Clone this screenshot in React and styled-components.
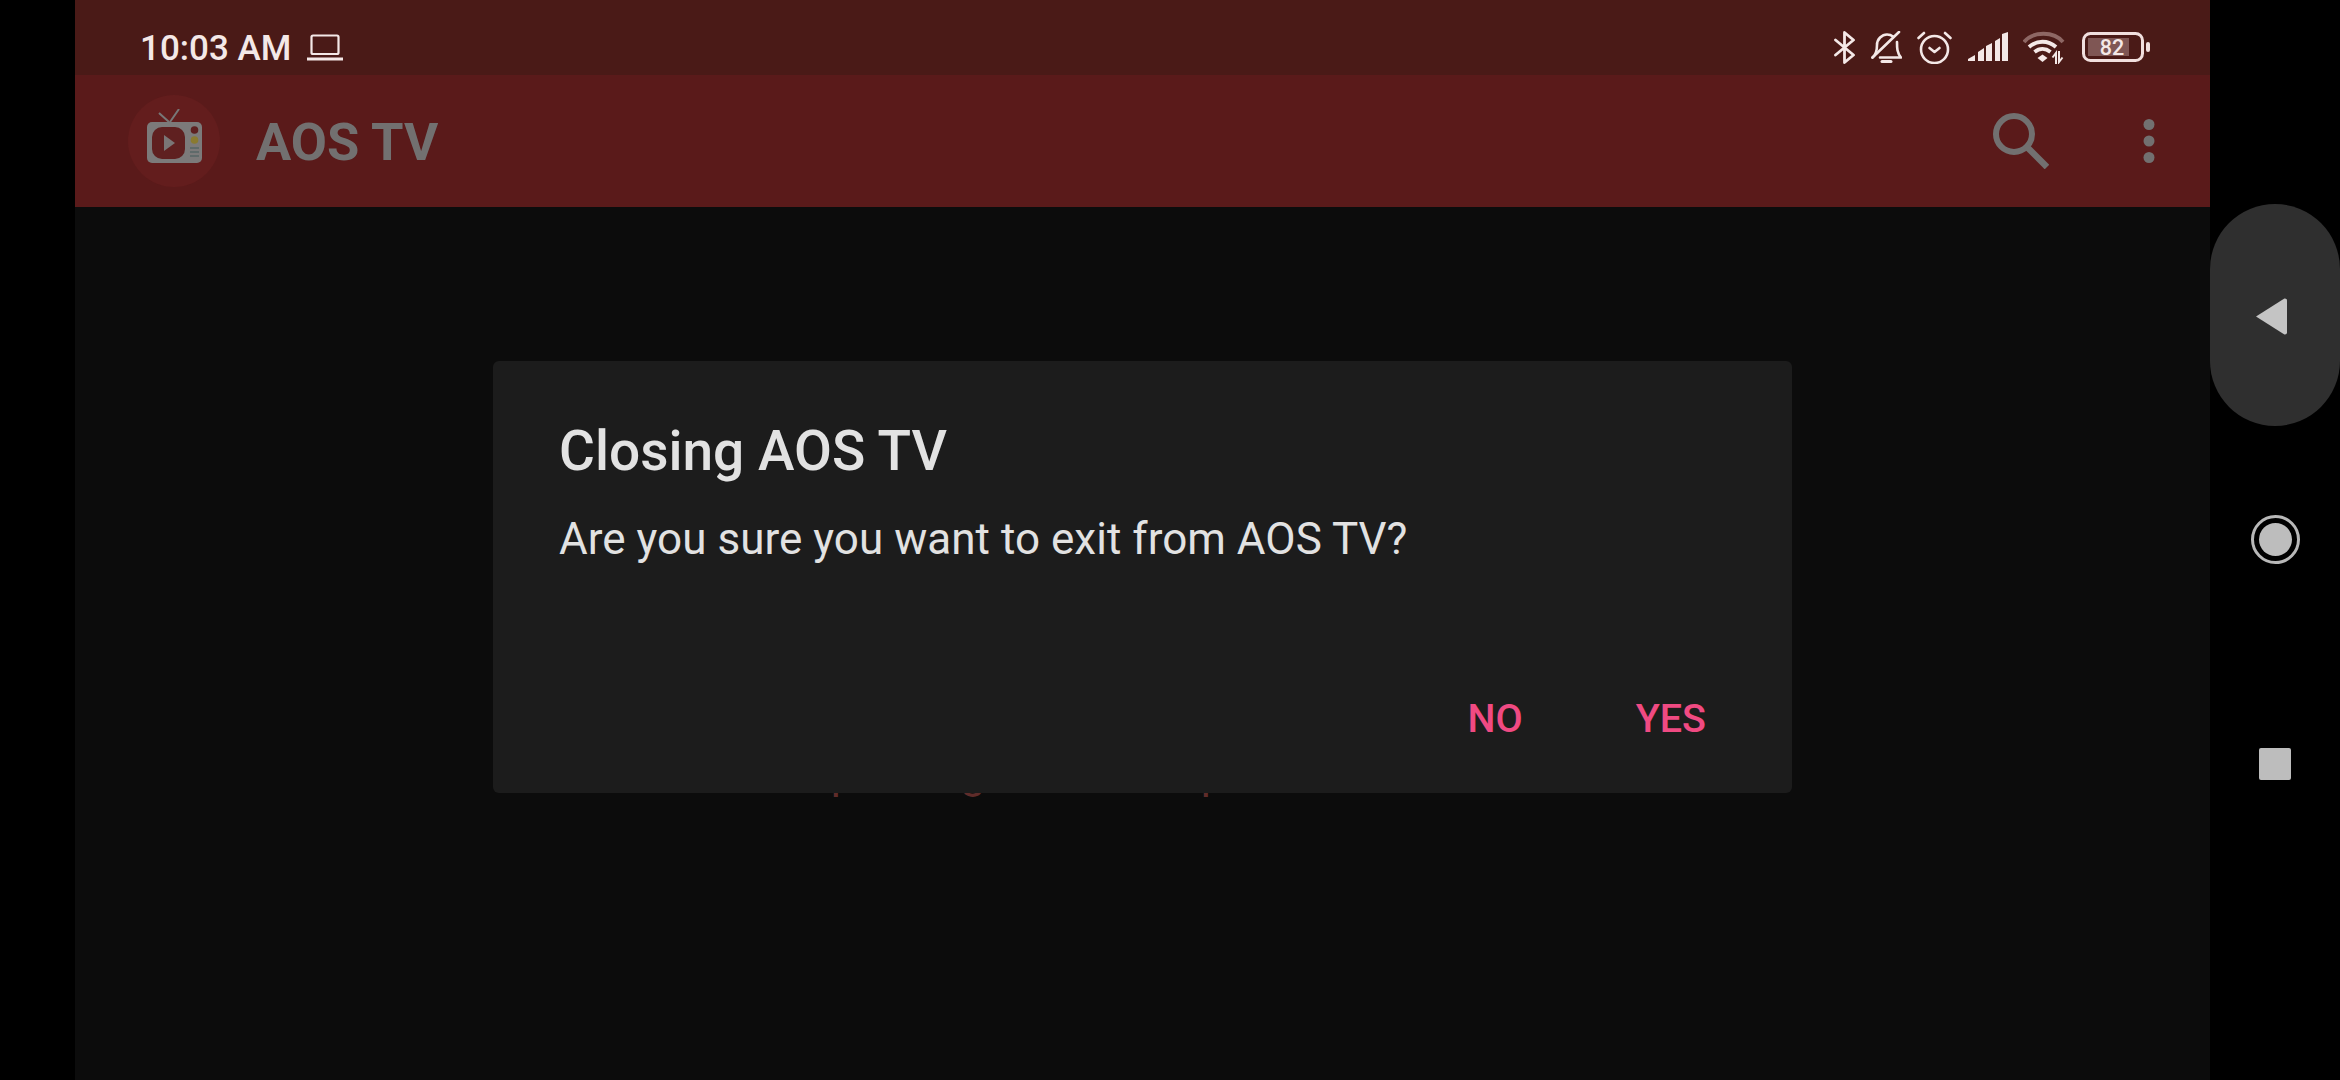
import React from "react";
import styled, { createGlobalStyle } from "styled-components";

const Global = createGlobalStyle`
  html, body { margin: 0; padding: 0; background: #000; width: 2340px; height: 1080px; overflow: hidden; }
  #root { width: 2340px; height: 1080px; }
  * { box-sizing: border-box; }
`;

const Device = styled.div`
  display: grid;
  grid-template-columns: 75px 2135px 130px;
  width: 2340px;
  height: 1080px;
  background: #000;
  font-family: Roboto, "Noto Sans", sans-serif;
`;
const Gutter = styled.div`background: #000;`;
const Screen = styled.div`
  position: relative;
  display: flex;
  flex-direction: column;
  background: #0c0c0c;
  overflow: hidden;
`;
const StatusBar = styled.div`
  height: 75px;
  flex: none;
  background: #4a1a17;
  display: flex;
  align-items: center;
  justify-content: space-between;
  padding: 19px 60px 0 65px;
  color: #f4e8e7;
`;
const Clock = styled.div`
  display: flex;
  align-items: center;
  gap: 16px;
  font-size: 35px;
  font-weight: 500;
  line-height: 40px;
`;
const ClockText = styled.span`
  padding-top: 3px;
`;
const StatusIcons = styled.div`
  display: flex;
  align-items: center;
  gap: 15.6px;
`;
const Toolbar = styled.div`
  height: 132px;
  flex: none;
  background: #5a1a1a;
  display: flex;
  align-items: center;
  padding: 0 55px 0 53px;
`;
const LogoCircle = styled.div`
  width: 92px;
  height: 92px;
  border-radius: 50%;
  background: #631d1d;
  display: flex;
  align-items: center;
  justify-content: center;
  padding-bottom: 10px;
  flex: none;
`;
const AppTitle = styled.div`
  margin-left: 36px;
  font-size: 52.5px;
  font-weight: 700;
  color: #727070;
  flex: 1;
  padding-top: 2px;
`;
const ToolButtons = styled.div`
  display: flex;
  align-items: center;
  gap: 94px;
`;
const Content = styled.div`
  flex: 1;
  display: flex;
  justify-content: center;
  padding-top: 536px;
`;
const HiddenText = styled.div`
  font-size: 44px;
  line-height: 60px;
  color: #5f2c2a;
  white-space: nowrap;
`;
const Dialog = styled.div`
  position: absolute;
  left: 418px;
  top: 361px;
  width: 1299px;
  height: 432px;
  background: #1c1c1c;
  border-radius: 6px;
  display: flex;
  flex-direction: column;
  padding: 0 66px;
`;
const DialogTitle = styled.div`
  margin-top: 60px;
  font-size: 55px;
  line-height: 60px;
  font-weight: 500;
  color: #e2e2e2;
`;
const DialogBody = styled.div`
  margin-top: 33px;
  font-size: 44px;
  line-height: 50px;
  letter-spacing: 0.03px;
  color: #e2e2e2;
`;
const DialogActions = styled.div`
  margin-top: auto;
  margin-bottom: 52px;
  display: flex;
  justify-content: flex-end;
  gap: 113px;
  padding-right: 20px;
`;
const ActionButton = styled.div`
  font-size: 39.5px;
  font-weight: 500;
  line-height: 44px;
  color: #f04a82;
`;
const Rail = styled.div`
  display: flex;
  flex-direction: column;
  align-items: center;
  background: #000;
  padding-top: 204px;
`;
const BackPill = styled.div`
  width: 130px;
  height: 222px;
  border-radius: 65px;
  background: #2f2f2f;
  display: flex;
  align-items: center;
  justify-content: center;
  padding: 3px 7px 0 0;
`;
const HomeRing = styled.div`
  margin-top: 89px;
  width: 49px;
  height: 49px;
  border-radius: 50%;
  border: 3px solid #b8b8b8;
  padding: 5px;
  display: flex;
`;
const HomeDot = styled.div`
  flex: 1;
  border-radius: 50%;
  background: #bdbdbd;
`;
const RecentSquare = styled.div`
  margin-top: 184px;
  width: 32px;
  height: 32px;
  border-radius: 2px;
  background: #bdbdbd;
`;

const ink = "#f4e8e7";

const Laptop = () => (
  <svg width="36" height="27" viewBox="0 0 36 27" fill="none" stroke={ink} strokeWidth="2.2">
    <rect x="4.5" y="1.5" width="27" height="18.500" rx="1.5" />
    <path d="M0 25h36" strokeWidth="3" />
  </svg>
);
const Bluetooth = () => (
  <svg width="21" height="33" viewBox="0 0 21 33" fill="none" stroke={ink} strokeWidth="2.8" strokeLinejoin="round" strokeLinecap="round">
    <path d="M1.500 9L19.500 24 10.500 31.500V1.500L19.500 9 1.500 24" />
  </svg>
);
const BellOff = () => (
  <svg width="31" height="32" viewBox="0 0 31 32" fill="none" stroke={ink} strokeWidth="2.6" strokeLinecap="round" strokeLinejoin="round">
    <path d="M1.500 26.500C6 23 6 18 6 14 6 8 11 3.500 16 3.500c2.500 0 4.500.8 6 2" />
    <path d="M26 11c0 6 0 11 4 15.500H9" />
    <path d="M11 30.500h9" strokeWidth="3" />
    <path d="M1.500 26.500L28 1" />
  </svg>
);
const Alarm = () => (
  <svg width="35" height="33" viewBox="0 0 35 33" fill="none" stroke={ink} strokeWidth="2.6" strokeLinecap="round" strokeLinejoin="round">
    <circle cx="17.500" cy="18.500" r="13.500" />
    <path d="M12.500 17l5 4 5-4" />
    <path d="M1.500 7L7 2M33.500 7L28 2" />
  </svg>
);
const Signal = () => (
  <svg width="40" height="30" viewBox="0 0 40 30" fill={ink}>
    <path d="M0 29v-2l7-4v6zM10 29V20l6-4v13zM18 29V14l6-3v18zM27 29V9l5-3v23zM34 29V2l6-2v29z" />
  </svg>
);
const Wifi = () => (
  <svg width="43" height="33" viewBox="0 0 43 33" fill="none">
    <path d="M1 11C10 0 31 0 40 11" stroke="#8e6764" strokeWidth="3.800" />
    <path d="M6 16c8-7 19-7 27 0" stroke={ink} strokeWidth="3.800" />
    <path d="M11.500 21c5-4 11-4 16 0" stroke={ink} strokeWidth="3.800" />
    <path d="M14.500 27l5-3.500 5 3.500-5 4z" fill={ink} />
    <path d="M33 33V22l-3.500 4.500M36 20v11l3.500-4.500" stroke={ink} strokeWidth="2" />
  </svg>
);
const Battery = () => (
  <svg width="68" height="30" viewBox="0 0 68 30">
    <rect x="1.500" y="1.500" width="59" height="27" rx="7" fill="none" stroke="#f1dfde" strokeWidth="3" />
    <rect x="6" y="6" width="41" height="18" fill="#7f5654" />
    <rect x="64" y="10" width="4" height="10" rx="2" fill="#f1dfde" />
    <text x="30" y="23" textAnchor="middle" fontFamily="Roboto" fontSize="21.500" fontWeight="500" fill={ink}>82</text>
  </svg>
);
const TvLogo = () => (
  <svg width="55" height="54" viewBox="0 0 55 54">
    <path d="M22 13L12 4M23 13L32 0" stroke="#777" strokeWidth="2" fill="none" />
    <rect x="0" y="13" width="55" height="41" rx="5" fill="#7c7a7a" />
    <rect x="5" y="18" width="33" height="32" rx="10" fill="#5f2020" />
    <path d="M17 26l11 8-11 8z" fill="#7a7676" />
    <circle cx="47.500" cy="21" r="3.800" fill="#5e2020" />
    <circle cx="47.500" cy="31" r="3.800" fill="#8a7a30" />
    <path d="M43 39h9M43 43h9M43 47h9" stroke="#5f6a6a" strokeWidth="1.800" />
  </svg>
);
const Search = () => (
  <svg width="56" height="56" viewBox="0 0 56 56" fill="none" stroke="#727070" strokeWidth="6">
    <circle cx="21" cy="21" r="18" />
    <path d="M33 33l21 21" strokeWidth="6.500" />
  </svg>
);
const More = () => (
  <svg width="12" height="44" viewBox="0 0 12 44" fill="#727070">
    <circle cx="6" cy="5.500" r="5.500" />
    <circle cx="6" cy="22" r="5.500" />
    <circle cx="6" cy="38.500" r="5.500" />
  </svg>
);
const BackArrow = () => (
  <svg width="31" height="37" viewBox="0 0 31 37">
    <path d="M28 .8c1.500-.6 3 .2 3 1.700v32c0 1.500-1.500 2.300-3 1.700L0 18.500z" fill="#c4c4c4" />
  </svg>
);

export default function App() {
  return (
    <>
      <Global />
      <Device>
        <Gutter />
        <Screen>
          <StatusBar>
            <Clock><ClockText>10:03 AM</ClockText> <Laptop /></Clock>
            <StatusIcons>
              <Bluetooth />
              <BellOff />
              <Alarm />
              <Signal />
              <Wifi />
              <Battery />
            </StatusIcons>
          </StatusBar>
          <Toolbar>
            <LogoCircle><TvLogo /></LogoCircle>
            <AppTitle>AOS TV</AppTitle>
            <ToolButtons>
              <Search />
              <More />
            </ToolButtons>
          </Toolbar>
          <Content>
            <HiddenText>Stop aiding and so stop all the channel</HiddenText>
          </Content>
          <Dialog>
            <DialogTitle>Closing AOS TV</DialogTitle>
            <DialogBody>Are you sure you want to exit from AOS TV?</DialogBody>
            <DialogActions>
              <ActionButton>NO</ActionButton>
              <ActionButton>YES</ActionButton>
            </DialogActions>
          </Dialog>
        </Screen>
        <Rail>
          <BackPill><BackArrow /></BackPill>
          <HomeRing><HomeDot /></HomeRing>
          <RecentSquare />
        </Rail>
      </Device>
    </>
  );
}
